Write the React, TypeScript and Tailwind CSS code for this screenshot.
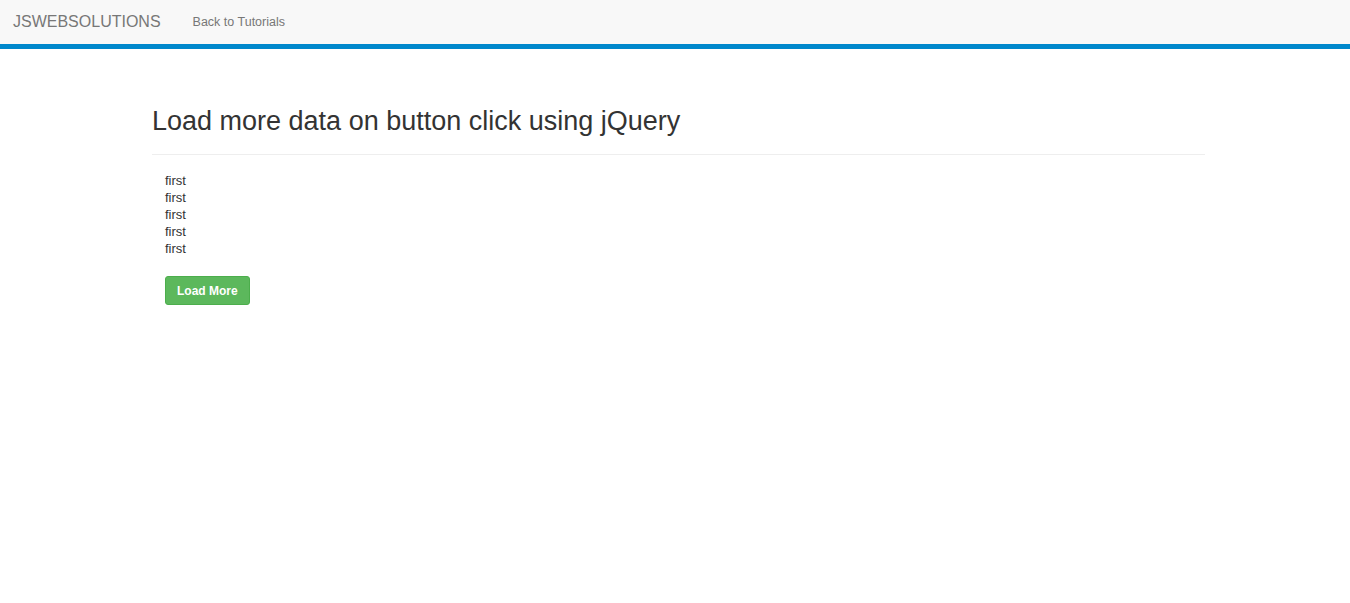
export default function App() {
  const items = ["first", "first", "first", "first", "first"];
  return (
    <div className="min-h-screen bg-white font-['Liberation_Sans',Arial,sans-serif] text-[14px] leading-[1.42857] text-[#333]">
      <nav className="flex h-[49px] items-start border-b-[5px] border-[#0088cc] bg-[#f8f8f8]">
        <span className="px-[13px] py-[12px] text-[16px] leading-[20px] text-[#777]">JSWEBSOLUTIONS</span>
        <span className="px-[19px] py-[12px] text-[12.5px] leading-[20px] text-[#777]">Back to Tutorials</span>
      </nav>
      <main className="mx-[145px] pt-[56px]">
        <div className="ml-[7px]">
          <h2 className="text-[27px] font-normal leading-[33px] text-[#333]">
            Load more data on button click using jQuery
          </h2>
          <hr className="mt-[16px] border-t border-[#eee]" />
          <div className="pl-[13px] pt-[17px]">
            <ul className="text-[13px] leading-[17px] text-[#333]">
              {items.map((t, i) => (
                <li key={i}>{t}</li>
              ))}
            </ul>
            <button className="mt-[19px] h-[29px] rounded-[3px] border border-[#4cae4c] bg-[#5cb85c] px-[11px] text-[12px] font-bold leading-[18px] text-white">
              Load More
            </button>
          </div>
        </div>
      </main>
    </div>
  );
}
